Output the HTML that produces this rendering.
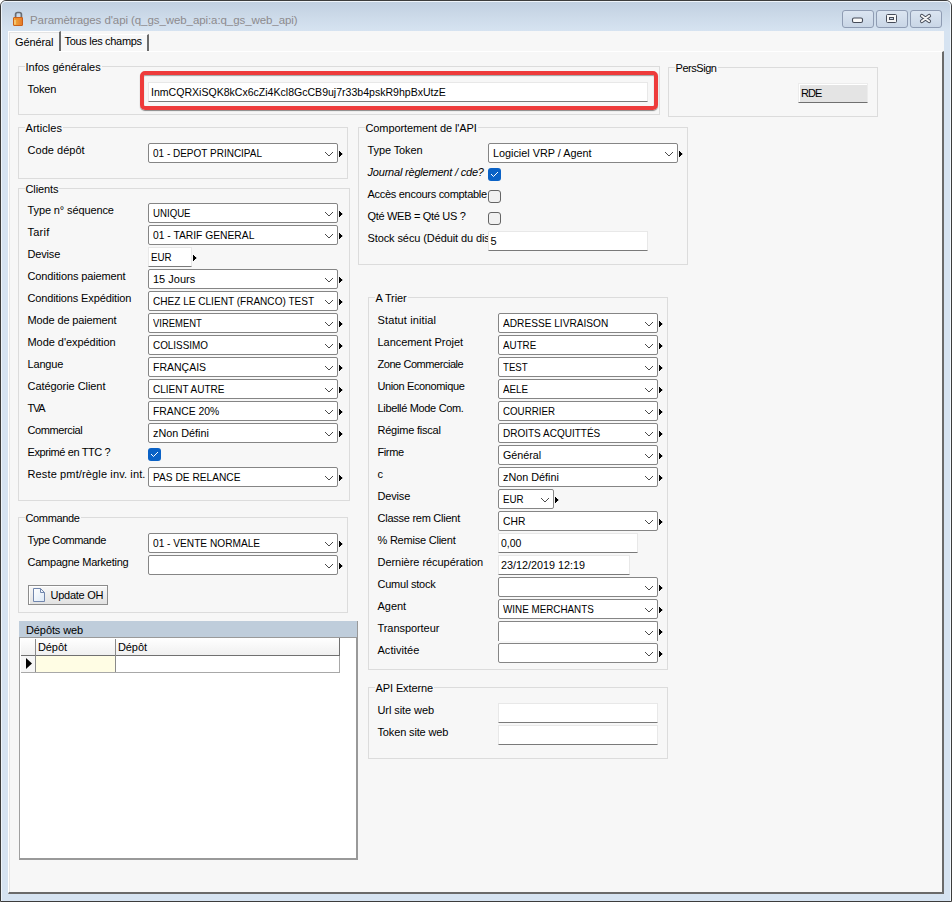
<!DOCTYPE html><html><head><meta charset="utf-8"><style>
*{margin:0;padding:0;box-sizing:border-box}
html,body{width:952px;height:902px;overflow:hidden;background:#fff}
body{position:relative;font-family:"Liberation Sans",sans-serif;font-size:11px;color:#000}
div,span,svg{position:absolute}
.frame{left:0;top:0;width:952px;height:902px;border:1px solid #3c3c3c;border-radius:6px 6px 0 0;
 background:linear-gradient(#c0cfe0 0px,#cbd9e8 14px,#d6e3f1 30px,#d6e3f1 100%);}
.frame2{left:1px;top:1px;width:950px;height:900px;border:1px solid #eef4fa;border-radius:5px 5px 0 0;border-bottom:none}
.title{left:30px;top:12px;font-size:11.5px;line-height:16px;color:#8d8b8e;white-space:nowrap;letter-spacing:-0.08px}
.wbtn{top:10px;width:32px;height:18px;border:1px solid #8f9cb3;border-radius:3px;
 background:linear-gradient(#dbe5f1,#c9d6e6)}
.client{left:8px;top:31px;width:936px;height:863px;background:#f7f7f7}
.lbl,.gt{white-space:nowrap;line-height:13px;letter-spacing:-0.1px}
.gt{background:#f7f7f7;padding:0 1px}
.grp{border:1px solid #dcdcdc}
.cb{border:1px solid #858585;border-radius:2px;background:#fff}
.clip{left:0;top:0;height:18px;overflow:hidden}
.ct{left:4px;top:3px;line-height:13px;white-space:nowrap}
.ed{border-top:1px solid #e8e8e8;border-left:1px solid #e8e8e8;border-right:1px solid #e8e8e8;border-bottom:1px solid #7a7a7a}
.et{left:1.5px;top:3px;line-height:13px;white-space:nowrap}
.chk{width:13px;height:13px;border:1px solid #656565;border-radius:3px;background:#f1f1f1}
.chk.on{border:none;background:#0a62c6}
.chk svg{left:0;top:0}
</style></head><body>
<div class="frame"></div><div class="frame2"></div>
<svg style="left:12px;top:11px" width="13" height="16">
<defs><linearGradient id="lg" x1="0" x2="1"><stop offset="0" stop-color="#f3b13a"/><stop offset="1" stop-color="#e4762a"/></linearGradient></defs>
<path d="M3.6 7 V3.5 Q3.6 1.5 5.6 1.5 H7.4 Q9.4 1.5 9.4 3.5 V7" fill="none" stroke="#6a6d73" stroke-width="1.7"/>
<rect x="1.5" y="6.5" width="9" height="8" rx="0.5" fill="url(#lg)" stroke="#c9601a" stroke-width="1"/><rect x="3" y="7" width="6" height="1.5" fill="#f08a2a"/>
<rect x="2.5" y="9" width="1" height="4.5" fill="#f8e0a8"/>
</svg>
<div class="title">Paramètrages d'api (q_gs_web_api:a:q_gs_web_api)</div>
<div class="wbtn" style="left:842px"></div>
<div class="wbtn" style="left:876px"></div>
<div class="wbtn" style="left:910px"></div>
<svg style="left:851px;top:16px" width="13" height="8"><rect x="1.5" y="2" width="10" height="4.5" rx="1.5" fill="#fafafa" stroke="#454b58" stroke-width="1.1"/></svg>
<svg style="left:885px;top:13px" width="13" height="11"><rect x="1.5" y="1.5" width="10" height="8" rx="1" fill="#f6f6f6" stroke="#454b58" stroke-width="1"/><rect x="4.5" y="4.5" width="4" height="2" fill="#c9d6e6" stroke="#454b58" stroke-width="1"/></svg>
<svg style="left:919px;top:13px" width="14" height="11"><path d="M2.8 2.8 L10.2 8.2 M10.2 2.8 L2.8 8.2" stroke="#454b58" stroke-width="3.8" stroke-linecap="round"/><path d="M2.8 2.8 L10.2 8.2 M10.2 2.8 L2.8 8.2" stroke="#f4f4f4" stroke-width="2" stroke-linecap="round"/></svg>
<div class="client"></div>
<div style="left:60px;top:34px;width:89px;height:18px;background:#f7f7f7;border-top:1px solid #fff;border-left:1px solid #fff;border-right:2px solid #6a6a6a"></div>
<div style="left:8px;top:31px;width:53px;height:21px;background:#f7f7f7;border-top:1px solid #fff;border-left:1px solid #fff;border-right:2px solid #6a6a6a"></div>
<div style="left:8px;top:51px;width:936px;height:843px;border-top:1px solid #fff;border-left:1px solid #fff;border-right:2px solid #6a6a6a;border-bottom:2px solid #6a6a6a"></div>
<div style="left:9px;top:51px;width:50px;height:2px;background:#f7f7f7"></div>
<div style="left:9px;top:32px;width:1px;height:860px;background:#e4e4e4"></div>
<div style="left:9px;top:32px;width:50px;height:1px;background:#e4e4e4"></div>
<div class="lbl" style="left:15px;top:36px">Général</div>
<div class="lbl" style="left:64.5px;top:35px;letter-spacing:-0.31px">Tous les champs</div>
<div class="grp" style="left:18px;top:66px;width:642px;height:49px"></div>
<div class="gt" style="left:24.5px;top:61px;letter-spacing:0.0px">Infos générales</div>
<div class="lbl" style="left:27.5px;top:83px;">Token</div>
<div style="left:140px;top:71px;width:518px;height:39px;border:4px solid #ee3b3b;border-radius:5px;box-shadow:0 1px 1px rgba(0,0,0,0.45), inset 0 1px 1px rgba(0,0,0,0.35)"></div>
<div class="ed" style="left:148px;top:82px;width:500px;height:20px;background:#fff"><span class="et" style="transform:scaleX(0.9588);transform-origin:0 0">InmCQRXiSQK8kCx6cZi4Kcl8GcCB9uj7r33b4pskR9hpBxUtzE</span></div>
<div class="grp" style="left:668px;top:67px;width:210px;height:50px"></div>
<div class="gt" style="left:674.5px;top:62px;letter-spacing:-0.45px">PersSign</div>
<div class="ed" style="left:798px;top:83px;width:70px;height:20px;background:#e4e4e4;border-color:#ececec #ececec #707070 #ececec;box-shadow:inset 1px 1px 0 #fff"><span class="lbl" style="left:2px;top:3px;letter-spacing:-0.9px">RDE</span></div>
<div class="grp" style="left:18px;top:127px;width:330px;height:52px"></div>
<div class="gt" style="left:24.5px;top:122px;letter-spacing:0.05px">Articles</div>
<div class="lbl" style="left:27.5px;top:144px;letter-spacing:0.033px;">Code dépôt</div>
<div class="cb" style="left:148px;top:143px;width:190px;height:20px;"><div class="clip" style="width:166px"><span class="ct" style="transform:scaleX(0.9083);transform-origin:0 0">01 - DEPOT PRINCIPAL</span></div><svg class="chev" width="8" height="4" style="left:176px;top:8px"><path d="M0 0h1v1h-1zM1 1h1v1h-1zM2 2h1v1h-1zM3 3h2v1h-2zM5 2h1v1h-1zM6 1h1v1h-1zM7 0h1v1h-1z" fill="#4a4a4a"/></svg></div>
<svg class="tri" width="4" height="6" style="left:339px;top:151px"><rect x="0" y="0" width="1" height="6"/><rect x="1" y="1" width="1" height="4"/><rect x="2" y="2" width="1" height="2"/><rect x="3" y="2" width="1" height="2" fill="#c8c8c8"/></svg>
<div class="grp" style="left:18px;top:188px;width:332px;height:313px"></div>
<div class="gt" style="left:24.5px;top:183px;letter-spacing:-0.1px">Clients</div>
<div class="lbl" style="left:27.5px;top:204px;letter-spacing:-0.113px;">Type n° séquence</div>
<div class="cb" style="left:148px;top:203px;width:190px;height:20px;"><div class="clip" style="width:166px"><span class="ct" style="transform:scaleX(0.8780);transform-origin:0 0">UNIQUE</span></div><svg class="chev" width="8" height="4" style="left:176px;top:8px"><path d="M0 0h1v1h-1zM1 1h1v1h-1zM2 2h1v1h-1zM3 3h2v1h-2zM5 2h1v1h-1zM6 1h1v1h-1zM7 0h1v1h-1z" fill="#4a4a4a"/></svg></div>
<svg class="tri" width="4" height="6" style="left:339px;top:211px"><rect x="0" y="0" width="1" height="6"/><rect x="1" y="1" width="1" height="4"/><rect x="2" y="2" width="1" height="2"/><rect x="3" y="2" width="1" height="2" fill="#c8c8c8"/></svg>
<div class="lbl" style="left:27.5px;top:226px;letter-spacing:0.25px;">Tarif</div>
<div class="cb" style="left:148px;top:225px;width:190px;height:20px;"><div class="clip" style="width:166px"><span class="ct" style="transform:scaleX(0.9352);transform-origin:0 0">01 - TARIF GENERAL</span></div><svg class="chev" width="8" height="4" style="left:176px;top:8px"><path d="M0 0h1v1h-1zM1 1h1v1h-1zM2 2h1v1h-1zM3 3h2v1h-2zM5 2h1v1h-1zM6 1h1v1h-1zM7 0h1v1h-1z" fill="#4a4a4a"/></svg></div>
<svg class="tri" width="4" height="6" style="left:339px;top:233px"><rect x="0" y="0" width="1" height="6"/><rect x="1" y="1" width="1" height="4"/><rect x="2" y="2" width="1" height="2"/><rect x="3" y="2" width="1" height="2" fill="#c8c8c8"/></svg>
<div class="lbl" style="left:27.5px;top:248px;letter-spacing:-0.16px;">Devise</div>
<div class="ed" style="left:148px;top:247px;width:44px;height:20px;background:#fff"><span class="et" style="transform:scaleX(0.8864);transform-origin:0 0">EUR</span></div>
<svg class="tri" width="4" height="6" style="left:193px;top:255px"><rect x="0" y="0" width="1" height="6"/><rect x="1" y="1" width="1" height="4"/><rect x="2" y="2" width="1" height="2"/><rect x="3" y="2" width="1" height="2" fill="#c8c8c8"/></svg>
<div class="lbl" style="left:27.5px;top:270px;letter-spacing:-0.122px;">Conditions paiement</div>
<div class="cb" style="left:148px;top:269px;width:190px;height:20px;"><div class="clip" style="width:166px"><span class="ct" style="transform:scaleX(1.0000);transform-origin:0 0">15 Jours</span></div><svg class="chev" width="8" height="4" style="left:176px;top:8px"><path d="M0 0h1v1h-1zM1 1h1v1h-1zM2 2h1v1h-1zM3 3h2v1h-2zM5 2h1v1h-1zM6 1h1v1h-1zM7 0h1v1h-1z" fill="#4a4a4a"/></svg></div>
<svg class="tri" width="4" height="6" style="left:339px;top:277px"><rect x="0" y="0" width="1" height="6"/><rect x="1" y="1" width="1" height="4"/><rect x="2" y="2" width="1" height="2"/><rect x="3" y="2" width="1" height="2" fill="#c8c8c8"/></svg>
<div class="lbl" style="left:27.5px;top:292px;letter-spacing:-0.13px;">Conditions Expédition</div>
<div class="cb" style="left:148px;top:291px;width:190px;height:20px;"><div class="clip" style="width:171px"><span class="ct" style="transform:scaleX(0.9143);transform-origin:0 0">CHEZ LE CLIENT (FRANCO) TEST</span></div><svg class="chev" width="8" height="4" style="left:176px;top:8px"><path d="M0 0h1v1h-1zM1 1h1v1h-1zM2 2h1v1h-1zM3 3h2v1h-2zM5 2h1v1h-1zM6 1h1v1h-1zM7 0h1v1h-1z" fill="#4a4a4a"/></svg></div>
<svg class="tri" width="4" height="6" style="left:339px;top:299px"><rect x="0" y="0" width="1" height="6"/><rect x="1" y="1" width="1" height="4"/><rect x="2" y="2" width="1" height="2"/><rect x="3" y="2" width="1" height="2" fill="#c8c8c8"/></svg>
<div class="lbl" style="left:27.5px;top:314px;letter-spacing:-0.133px;">Mode de paiement</div>
<div class="cb" style="left:148px;top:313px;width:190px;height:20px;"><div class="clip" style="width:166px"><span class="ct" style="transform:scaleX(0.8596);transform-origin:0 0">VIREMENT</span></div><svg class="chev" width="8" height="4" style="left:176px;top:8px"><path d="M0 0h1v1h-1zM1 1h1v1h-1zM2 2h1v1h-1zM3 3h2v1h-2zM5 2h1v1h-1zM6 1h1v1h-1zM7 0h1v1h-1z" fill="#4a4a4a"/></svg></div>
<svg class="tri" width="4" height="6" style="left:339px;top:321px"><rect x="0" y="0" width="1" height="6"/><rect x="1" y="1" width="1" height="4"/><rect x="2" y="2" width="1" height="2"/><rect x="3" y="2" width="1" height="2" fill="#c8c8c8"/></svg>
<div class="lbl" style="left:27.5px;top:336px;letter-spacing:-0.05px;">Mode d'expédition</div>
<div class="cb" style="left:148px;top:335px;width:190px;height:20px;"><div class="clip" style="width:166px"><span class="ct" style="transform:scaleX(0.9000);transform-origin:0 0">COLISSIMO</span></div><svg class="chev" width="8" height="4" style="left:176px;top:8px"><path d="M0 0h1v1h-1zM1 1h1v1h-1zM2 2h1v1h-1zM3 3h2v1h-2zM5 2h1v1h-1zM6 1h1v1h-1zM7 0h1v1h-1z" fill="#4a4a4a"/></svg></div>
<svg class="tri" width="4" height="6" style="left:339px;top:343px"><rect x="0" y="0" width="1" height="6"/><rect x="1" y="1" width="1" height="4"/><rect x="2" y="2" width="1" height="2"/><rect x="3" y="2" width="1" height="2" fill="#c8c8c8"/></svg>
<div class="lbl" style="left:27.5px;top:358px;letter-spacing:-0.16px;">Langue</div>
<div class="cb" style="left:148px;top:357px;width:190px;height:20px;"><div class="clip" style="width:166px"><span class="ct" style="transform:scaleX(0.9537);transform-origin:0 0">FRANÇAIS</span></div><svg class="chev" width="8" height="4" style="left:176px;top:8px"><path d="M0 0h1v1h-1zM1 1h1v1h-1zM2 2h1v1h-1zM3 3h2v1h-2zM5 2h1v1h-1zM6 1h1v1h-1zM7 0h1v1h-1z" fill="#4a4a4a"/></svg></div>
<svg class="tri" width="4" height="6" style="left:339px;top:365px"><rect x="0" y="0" width="1" height="6"/><rect x="1" y="1" width="1" height="4"/><rect x="2" y="2" width="1" height="2"/><rect x="3" y="2" width="1" height="2" fill="#c8c8c8"/></svg>
<div class="lbl" style="left:27.5px;top:380px;letter-spacing:-0.06px;">Catégorie Client</div>
<div class="cb" style="left:148px;top:379px;width:190px;height:20px;"><div class="clip" style="width:166px"><span class="ct" style="transform:scaleX(0.9091);transform-origin:0 0">CLIENT AUTRE</span></div><svg class="chev" width="8" height="4" style="left:176px;top:8px"><path d="M0 0h1v1h-1zM1 1h1v1h-1zM2 2h1v1h-1zM3 3h2v1h-2zM5 2h1v1h-1zM6 1h1v1h-1zM7 0h1v1h-1z" fill="#4a4a4a"/></svg></div>
<svg class="tri" width="4" height="6" style="left:339px;top:387px"><rect x="0" y="0" width="1" height="6"/><rect x="1" y="1" width="1" height="4"/><rect x="2" y="2" width="1" height="2"/><rect x="3" y="2" width="1" height="2" fill="#c8c8c8"/></svg>
<div class="lbl" style="left:27.5px;top:402px;letter-spacing:-1.3px;">TVA</div>
<div class="cb" style="left:148px;top:401px;width:190px;height:20px;"><div class="clip" style="width:166px"><span class="ct" style="transform:scaleX(0.9420);transform-origin:0 0">FRANCE 20%</span></div><svg class="chev" width="8" height="4" style="left:176px;top:8px"><path d="M0 0h1v1h-1zM1 1h1v1h-1zM2 2h1v1h-1zM3 3h2v1h-2zM5 2h1v1h-1zM6 1h1v1h-1zM7 0h1v1h-1z" fill="#4a4a4a"/></svg></div>
<svg class="tri" width="4" height="6" style="left:339px;top:409px"><rect x="0" y="0" width="1" height="6"/><rect x="1" y="1" width="1" height="4"/><rect x="2" y="2" width="1" height="2"/><rect x="3" y="2" width="1" height="2" fill="#c8c8c8"/></svg>
<div class="lbl" style="left:27.5px;top:424px;letter-spacing:-0.389px;">Commercial</div>
<div class="cb" style="left:148px;top:423px;width:190px;height:20px;"><div class="clip" style="width:166px"><span class="ct" style="transform:scaleX(0.9821);transform-origin:0 0">zNon Défini</span></div><svg class="chev" width="8" height="4" style="left:176px;top:8px"><path d="M0 0h1v1h-1zM1 1h1v1h-1zM2 2h1v1h-1zM3 3h2v1h-2zM5 2h1v1h-1zM6 1h1v1h-1zM7 0h1v1h-1z" fill="#4a4a4a"/></svg></div>
<svg class="tri" width="4" height="6" style="left:339px;top:431px"><rect x="0" y="0" width="1" height="6"/><rect x="1" y="1" width="1" height="4"/><rect x="2" y="2" width="1" height="2"/><rect x="3" y="2" width="1" height="2" fill="#c8c8c8"/></svg>
<div class="lbl" style="left:27.5px;top:446px;letter-spacing:-0.393px;">Exprimé en TTC ?</div>
<div class="chk on" style="left:148px;top:448px"><svg width="13" height="13"><path d="M3 6 L5.5 8.5 L10 4" fill="none" stroke="#fff" stroke-width="1"/></svg></div>
<div class="lbl" style="left:27.5px;top:468px;letter-spacing:0.133px;">Reste pmt/règle inv. int.</div>
<div class="cb" style="left:148px;top:467px;width:190px;height:20px;"><div class="clip" style="width:166px"><span class="ct" style="transform:scaleX(0.9247);transform-origin:0 0">PAS DE RELANCE</span></div><svg class="chev" width="8" height="4" style="left:176px;top:8px"><path d="M0 0h1v1h-1zM1 1h1v1h-1zM2 2h1v1h-1zM3 3h2v1h-2zM5 2h1v1h-1zM6 1h1v1h-1zM7 0h1v1h-1z" fill="#4a4a4a"/></svg></div>
<svg class="tri" width="4" height="6" style="left:339px;top:475px"><rect x="0" y="0" width="1" height="6"/><rect x="1" y="1" width="1" height="4"/><rect x="2" y="2" width="1" height="2"/><rect x="3" y="2" width="1" height="2" fill="#c8c8c8"/></svg>
<div class="grp" style="left:18px;top:517px;width:330px;height:96px"></div>
<div class="gt" style="left:24.5px;top:512px;letter-spacing:-0.35px">Commande</div>
<div class="lbl" style="left:27.5px;top:534px;letter-spacing:-0.408px;">Type Commande</div>
<div class="cb" style="left:148px;top:533px;width:190px;height:20px;"><div class="clip" style="width:166px"><span class="ct" style="transform:scaleX(0.9224);transform-origin:0 0">01 - VENTE NORMALE</span></div><svg class="chev" width="8" height="4" style="left:176px;top:8px"><path d="M0 0h1v1h-1zM1 1h1v1h-1zM2 2h1v1h-1zM3 3h2v1h-2zM5 2h1v1h-1zM6 1h1v1h-1zM7 0h1v1h-1z" fill="#4a4a4a"/></svg></div>
<svg class="tri" width="4" height="6" style="left:339px;top:541px"><rect x="0" y="0" width="1" height="6"/><rect x="1" y="1" width="1" height="4"/><rect x="2" y="2" width="1" height="2"/><rect x="3" y="2" width="1" height="2" fill="#c8c8c8"/></svg>
<div class="lbl" style="left:27.5px;top:556px;letter-spacing:-0.235px;">Campagne Marketing</div>
<div class="cb" style="left:148px;top:555px;width:190px;height:20px;"><div class="clip" style="width:166px"><span class="ct" style=""></span></div><svg class="chev" width="8" height="4" style="left:176px;top:8px"><path d="M0 0h1v1h-1zM1 1h1v1h-1zM2 2h1v1h-1zM3 3h2v1h-2zM5 2h1v1h-1zM6 1h1v1h-1zM7 0h1v1h-1z" fill="#4a4a4a"/></svg></div>
<svg class="tri" width="4" height="6" style="left:339px;top:563px"><rect x="0" y="0" width="1" height="6"/><rect x="1" y="1" width="1" height="4"/><rect x="2" y="2" width="1" height="2"/><rect x="3" y="2" width="1" height="2" fill="#c8c8c8"/></svg>
<div style="left:28px;top:585px;width:80px;height:20px;border:1px solid #8c8c8c;background:linear-gradient(#f8f8f8,#e2e2e2);box-shadow:inset 1px 1px 0 #fff"></div>
<svg style="left:32px;top:587px" width="14" height="16"><defs><linearGradient id="dg" x1="0" y1="0" x2="1" y2="1"><stop offset="0" stop-color="#fff"/><stop offset="1" stop-color="#dce8f6"/></linearGradient></defs><path d="M1.5 1.5 H8.5 L12.5 5.5 V14.5 H1.5 Z" fill="url(#dg)" stroke="#7186ad"/><path d="M8.5 1.5 V5.5 H12.5" fill="none" stroke="#7186ad"/></svg>
<div class="lbl" style="left:50.5px;top:589px;letter-spacing:-0.25px">Update OH</div>
<div style="left:19px;top:621px;width:339px;height:239px;background:#fff;border-left:1px solid #a0a0a0;border-right:2px solid #999;border-bottom:2px solid #999"></div>
<div style="left:19px;top:621px;width:338px;height:17px;background:#bfcddb;border-bottom:1px solid #9a9a9a"></div>
<div class="lbl" style="left:26px;top:624px;">Dépôts web</div>
<div style="left:21px;top:638px;width:319px;height:18px;background:linear-gradient(#fff,#f0f0f0);border-bottom:1px solid #707070;border-right:1px solid #707070"></div>
<div style="left:35px;top:639px;width:1px;height:34px;background:#8a8a8a"></div>
<div style="left:115px;top:639px;width:1px;height:34px;background:#8a8a8a"></div>
<div class="lbl" style="left:38px;top:641px;">Dépôt</div>
<div class="lbl" style="left:118px;top:641px;">Dépôt</div>
<div style="left:21px;top:656px;width:14px;height:17px;background:#f6f6f6;border-bottom:1px solid #8a8a8a"></div>
<div style="left:36px;top:656px;width:79px;height:16px;background:#fffde4"></div>
<div style="left:21px;top:672px;width:319px;height:1px;background:#a8a8a8"></div>
<div style="left:339px;top:656px;width:1px;height:17px;background:#a8a8a8"></div>
<svg style="left:26px;top:658px" width="7" height="12"><path d="M0 0 L6 5.5 L0 11 Z" fill="#000"/></svg>
<div class="grp" style="left:358px;top:127px;width:330px;height:138px"></div>
<div class="gt" style="left:364.5px;top:122px;letter-spacing:-0.1px">Comportement de l'API</div>
<div class="lbl" style="left:367.5px;top:144px;letter-spacing:-0.111px;">Type Token</div>
<div class="cb" style="left:488px;top:143px;width:190px;height:20px;"><div class="clip" style="width:166px"><span class="ct" style="transform:scaleX(0.9838);transform-origin:0 0">Logiciel VRP / Agent</span></div><svg class="chev" width="8" height="4" style="left:176px;top:8px"><path d="M0 0h1v1h-1zM1 1h1v1h-1zM2 2h1v1h-1zM3 3h2v1h-2zM5 2h1v1h-1zM6 1h1v1h-1zM7 0h1v1h-1z" fill="#4a4a4a"/></svg></div>
<svg class="tri" width="4" height="6" style="left:679px;top:151px"><rect x="0" y="0" width="1" height="6"/><rect x="1" y="1" width="1" height="4"/><rect x="2" y="2" width="1" height="2"/><rect x="3" y="2" width="1" height="2" fill="#c8c8c8"/></svg>
<div class="lbl" style="left:367.5px;top:166px;font-style:italic;letter-spacing:-0.2px">Journal règlement / cde?</div>
<div class="chk on" style="left:488px;top:168px"><svg width="13" height="13"><path d="M3 6 L5.5 8.5 L10 4" fill="none" stroke="#fff" stroke-width="1"/></svg></div>
<div class="lbl" style="left:367.5px;top:188px;letter-spacing:-0.291px;">Accès encours comptable</div>
<div class="chk" style="left:488px;top:190px"></div>
<div class="lbl" style="left:367.5px;top:210px;letter-spacing:-0.312px;">Qté WEB = Qté US ?</div>
<div class="chk" style="left:488px;top:212px"></div>
<div style="left:360px;top:225px;width:128px;height:20px;overflow:hidden"><div class="lbl" style="left:7.5px;top:7px">Stock sécu (Déduit du disponible)</div></div>
<div class="ed" style="left:488px;top:231px;width:160px;height:20px;background:#fff"><span class="et" style="">5</span></div>
<div class="grp" style="left:368px;top:297px;width:300px;height:373px"></div>
<div class="gt" style="left:374.5px;top:292px;letter-spacing:-0.1px">A Trier</div>
<div class="lbl" style="left:377.5px;top:314px;letter-spacing:0.131px;">Statut initial</div>
<div class="cb" style="left:498px;top:313px;width:160px;height:20px;"><div class="clip" style="width:136px"><span class="ct" style="transform:scaleX(0.9211);transform-origin:0 0">ADRESSE LIVRAISON</span></div><svg class="chev" width="8" height="4" style="left:146px;top:8px"><path d="M0 0h1v1h-1zM1 1h1v1h-1zM2 2h1v1h-1zM3 3h2v1h-2zM5 2h1v1h-1zM6 1h1v1h-1zM7 0h1v1h-1z" fill="#4a4a4a"/></svg></div>
<svg class="tri" width="4" height="6" style="left:659px;top:321px"><rect x="0" y="0" width="1" height="6"/><rect x="1" y="1" width="1" height="4"/><rect x="2" y="2" width="1" height="2"/><rect x="3" y="2" width="1" height="2" fill="#c8c8c8"/></svg>
<div class="lbl" style="left:377.5px;top:336px;letter-spacing:-0.047px;">Lancement Projet</div>
<div class="cb" style="left:498px;top:335px;width:160px;height:20px;"><div class="clip" style="width:136px"><span class="ct" style="transform:scaleX(0.8919);transform-origin:0 0">AUTRE</span></div><svg class="chev" width="8" height="4" style="left:146px;top:8px"><path d="M0 0h1v1h-1zM1 1h1v1h-1zM2 2h1v1h-1zM3 3h2v1h-2zM5 2h1v1h-1zM6 1h1v1h-1zM7 0h1v1h-1z" fill="#4a4a4a"/></svg></div>
<svg class="tri" width="4" height="6" style="left:659px;top:343px"><rect x="0" y="0" width="1" height="6"/><rect x="1" y="1" width="1" height="4"/><rect x="2" y="2" width="1" height="2"/><rect x="3" y="2" width="1" height="2" fill="#c8c8c8"/></svg>
<div class="lbl" style="left:377.5px;top:358px;letter-spacing:-0.447px;">Zone Commerciale</div>
<div class="cb" style="left:498px;top:357px;width:160px;height:20px;"><div class="clip" style="width:136px"><span class="ct" style="transform:scaleX(0.8786);transform-origin:0 0">TEST</span></div><svg class="chev" width="8" height="4" style="left:146px;top:8px"><path d="M0 0h1v1h-1zM1 1h1v1h-1zM2 2h1v1h-1zM3 3h2v1h-2zM5 2h1v1h-1zM6 1h1v1h-1zM7 0h1v1h-1z" fill="#4a4a4a"/></svg></div>
<svg class="tri" width="4" height="6" style="left:659px;top:365px"><rect x="0" y="0" width="1" height="6"/><rect x="1" y="1" width="1" height="4"/><rect x="2" y="2" width="1" height="2"/><rect x="3" y="2" width="1" height="2" fill="#c8c8c8"/></svg>
<div class="lbl" style="left:377.5px;top:380px;letter-spacing:-0.38px;">Union Economique</div>
<div class="cb" style="left:498px;top:379px;width:160px;height:20px;"><div class="clip" style="width:136px"><span class="ct" style="transform:scaleX(0.8929);transform-origin:0 0">AELE</span></div><svg class="chev" width="8" height="4" style="left:146px;top:8px"><path d="M0 0h1v1h-1zM1 1h1v1h-1zM2 2h1v1h-1zM3 3h2v1h-2zM5 2h1v1h-1zM6 1h1v1h-1zM7 0h1v1h-1z" fill="#4a4a4a"/></svg></div>
<svg class="tri" width="4" height="6" style="left:659px;top:387px"><rect x="0" y="0" width="1" height="6"/><rect x="1" y="1" width="1" height="4"/><rect x="2" y="2" width="1" height="2"/><rect x="3" y="2" width="1" height="2" fill="#c8c8c8"/></svg>
<div class="lbl" style="left:377.5px;top:402px;letter-spacing:-0.331px;">Libellé Mode Com.</div>
<div class="cb" style="left:498px;top:401px;width:160px;height:20px;"><div class="clip" style="width:136px"><span class="ct" style="transform:scaleX(0.8860);transform-origin:0 0">COURRIER</span></div><svg class="chev" width="8" height="4" style="left:146px;top:8px"><path d="M0 0h1v1h-1zM1 1h1v1h-1zM2 2h1v1h-1zM3 3h2v1h-2zM5 2h1v1h-1zM6 1h1v1h-1zM7 0h1v1h-1z" fill="#4a4a4a"/></svg></div>
<svg class="tri" width="4" height="6" style="left:659px;top:409px"><rect x="0" y="0" width="1" height="6"/><rect x="1" y="1" width="1" height="4"/><rect x="2" y="2" width="1" height="2"/><rect x="3" y="2" width="1" height="2" fill="#c8c8c8"/></svg>
<div class="lbl" style="left:377.5px;top:424px;letter-spacing:-0.225px;">Régime fiscal</div>
<div class="cb" style="left:498px;top:423px;width:160px;height:20px;"><div class="clip" style="width:136px"><span class="ct" style="transform:scaleX(0.9094);transform-origin:0 0">DROITS ACQUITTÉS</span></div><svg class="chev" width="8" height="4" style="left:146px;top:8px"><path d="M0 0h1v1h-1zM1 1h1v1h-1zM2 2h1v1h-1zM3 3h2v1h-2zM5 2h1v1h-1zM6 1h1v1h-1zM7 0h1v1h-1z" fill="#4a4a4a"/></svg></div>
<svg class="tri" width="4" height="6" style="left:659px;top:431px"><rect x="0" y="0" width="1" height="6"/><rect x="1" y="1" width="1" height="4"/><rect x="2" y="2" width="1" height="2"/><rect x="3" y="2" width="1" height="2" fill="#c8c8c8"/></svg>
<div class="lbl" style="left:377.5px;top:446px;letter-spacing:-0.4px;">Firme</div>
<div class="cb" style="left:498px;top:445px;width:160px;height:20px;"><div class="clip" style="width:136px"><span class="ct" style="transform:scaleX(0.9744);transform-origin:0 0">Général</span></div><svg class="chev" width="8" height="4" style="left:146px;top:8px"><path d="M0 0h1v1h-1zM1 1h1v1h-1zM2 2h1v1h-1zM3 3h2v1h-2zM5 2h1v1h-1zM6 1h1v1h-1zM7 0h1v1h-1z" fill="#4a4a4a"/></svg></div>
<svg class="tri" width="4" height="6" style="left:659px;top:453px"><rect x="0" y="0" width="1" height="6"/><rect x="1" y="1" width="1" height="4"/><rect x="2" y="2" width="1" height="2"/><rect x="3" y="2" width="1" height="2" fill="#c8c8c8"/></svg>
<div class="lbl" style="left:377.5px;top:468px;">c</div>
<div class="cb" style="left:498px;top:467px;width:160px;height:20px;"><div class="clip" style="width:136px"><span class="ct" style="transform:scaleX(0.9821);transform-origin:0 0">zNon Défini</span></div><svg class="chev" width="8" height="4" style="left:146px;top:8px"><path d="M0 0h1v1h-1zM1 1h1v1h-1zM2 2h1v1h-1zM3 3h2v1h-2zM5 2h1v1h-1zM6 1h1v1h-1zM7 0h1v1h-1z" fill="#4a4a4a"/></svg></div>
<svg class="tri" width="4" height="6" style="left:659px;top:475px"><rect x="0" y="0" width="1" height="6"/><rect x="1" y="1" width="1" height="4"/><rect x="2" y="2" width="1" height="2"/><rect x="3" y="2" width="1" height="2" fill="#c8c8c8"/></svg>
<div class="lbl" style="left:377.5px;top:490px;letter-spacing:-0.16px;">Devise</div>
<div class="cb" style="left:498px;top:489px;width:56px;height:20px;"><div class="clip" style="width:30px"><span class="ct" style="transform:scaleX(0.8864);transform-origin:0 0">EUR</span></div><svg class="chev" width="8" height="4" style="left:42px;top:8px"><path d="M0 0h1v1h-1zM1 1h1v1h-1zM2 2h1v1h-1zM3 3h2v1h-2zM5 2h1v1h-1zM6 1h1v1h-1zM7 0h1v1h-1z" fill="#4a4a4a"/></svg></div>
<svg class="tri" width="4" height="6" style="left:555px;top:497px"><rect x="0" y="0" width="1" height="6"/><rect x="1" y="1" width="1" height="4"/><rect x="2" y="2" width="1" height="2"/><rect x="3" y="2" width="1" height="2" fill="#c8c8c8"/></svg>
<div class="lbl" style="left:377.5px;top:512px;letter-spacing:-0.256px;">Classe rem Client</div>
<div class="cb" style="left:498px;top:511px;width:160px;height:20px;"><div class="clip" style="width:136px"><span class="ct" style="transform:scaleX(0.9364);transform-origin:0 0">CHR</span></div><svg class="chev" width="8" height="4" style="left:146px;top:8px"><path d="M0 0h1v1h-1zM1 1h1v1h-1zM2 2h1v1h-1zM3 3h2v1h-2zM5 2h1v1h-1zM6 1h1v1h-1zM7 0h1v1h-1z" fill="#4a4a4a"/></svg></div>
<svg class="tri" width="4" height="6" style="left:659px;top:519px"><rect x="0" y="0" width="1" height="6"/><rect x="1" y="1" width="1" height="4"/><rect x="2" y="2" width="1" height="2"/><rect x="3" y="2" width="1" height="2" fill="#c8c8c8"/></svg>
<div class="lbl" style="left:377.5px;top:534px;letter-spacing:-0.221px;">% Remise Client</div>
<div class="ed" style="left:498px;top:533px;width:140px;height:20px;background:#fff"><span class="et" style="transform:scaleX(0.9524);transform-origin:0 0">0,00</span></div>
<div class="lbl" style="left:377.5px;top:556px;letter-spacing:-0.04px;">Dernière récupération</div>
<div class="ed" style="left:498px;top:555px;width:132px;height:20px;background:#fff"><span class="et" style="transform:scaleX(0.9812);transform-origin:0 0">23/12/2019 12:19</span></div>
<div class="lbl" style="left:377.5px;top:578px;letter-spacing:-0.23px;">Cumul stock</div>
<div class="cb" style="left:498px;top:577px;width:160px;height:20px;"><div class="clip" style="width:136px"><span class="ct" style=""></span></div><svg class="chev" width="8" height="4" style="left:146px;top:8px"><path d="M0 0h1v1h-1zM1 1h1v1h-1zM2 2h1v1h-1zM3 3h2v1h-2zM5 2h1v1h-1zM6 1h1v1h-1zM7 0h1v1h-1z" fill="#4a4a4a"/></svg></div>
<svg class="tri" width="4" height="6" style="left:659px;top:585px"><rect x="0" y="0" width="1" height="6"/><rect x="1" y="1" width="1" height="4"/><rect x="2" y="2" width="1" height="2"/><rect x="3" y="2" width="1" height="2" fill="#c8c8c8"/></svg>
<div class="lbl" style="left:377.5px;top:600px;letter-spacing:-0.025px;">Agent</div>
<div class="cb" style="left:498px;top:599px;width:160px;height:20px;"><div class="clip" style="width:136px"><span class="ct" style="transform:scaleX(0.8950);transform-origin:0 0">WINE MERCHANTS</span></div><svg class="chev" width="8" height="4" style="left:146px;top:8px"><path d="M0 0h1v1h-1zM1 1h1v1h-1zM2 2h1v1h-1zM3 3h2v1h-2zM5 2h1v1h-1zM6 1h1v1h-1zM7 0h1v1h-1z" fill="#4a4a4a"/></svg></div>
<svg class="tri" width="4" height="6" style="left:659px;top:607px"><rect x="0" y="0" width="1" height="6"/><rect x="1" y="1" width="1" height="4"/><rect x="2" y="2" width="1" height="2"/><rect x="3" y="2" width="1" height="2" fill="#c8c8c8"/></svg>
<div class="lbl" style="left:377.5px;top:622px;letter-spacing:-0.064px;">Transporteur</div>
<div class="cb" style="left:498px;top:621px;width:160px;height:20px;border-bottom:none;border-radius:2px 2px 0 0;"><div class="clip" style="width:136px"><span class="ct" style=""></span></div><svg class="chev" width="8" height="4" style="left:146px;top:9px"><path d="M0 0h1v1h-1zM1 1h1v1h-1zM2 2h1v1h-1zM3 3h2v1h-2zM5 2h1v1h-1zM6 1h1v1h-1zM7 0h1v1h-1z" fill="#4a4a4a"/></svg></div>
<svg class="tri" width="4" height="6" style="left:659px;top:629px"><rect x="0" y="0" width="1" height="6"/><rect x="1" y="1" width="1" height="4"/><rect x="2" y="2" width="1" height="2"/><rect x="3" y="2" width="1" height="2" fill="#c8c8c8"/></svg>
<div class="lbl" style="left:377.5px;top:644px;letter-spacing:0.037px;">Activitée</div>
<div class="cb" style="left:498px;top:643px;width:160px;height:20px;"><div class="clip" style="width:136px"><span class="ct" style=""></span></div><svg class="chev" width="8" height="4" style="left:146px;top:8px"><path d="M0 0h1v1h-1zM1 1h1v1h-1zM2 2h1v1h-1zM3 3h2v1h-2zM5 2h1v1h-1zM6 1h1v1h-1zM7 0h1v1h-1z" fill="#4a4a4a"/></svg></div>
<svg class="tri" width="4" height="6" style="left:659px;top:651px"><rect x="0" y="0" width="1" height="6"/><rect x="1" y="1" width="1" height="4"/><rect x="2" y="2" width="1" height="2"/><rect x="3" y="2" width="1" height="2" fill="#c8c8c8"/></svg>
<div class="grp" style="left:368px;top:687px;width:300px;height:72px"></div>
<div class="gt" style="left:374.5px;top:682px;letter-spacing:-0.1px">API Externe</div>
<div class="lbl" style="left:377.5px;top:704px;letter-spacing:-0.082px;">Url site web</div>
<div class="ed" style="left:498px;top:703px;width:160px;height:20px;background:#fff"><span class="et" style=""></span></div>
<div class="lbl" style="left:377.5px;top:726px;letter-spacing:-0.146px;">Token site web</div>
<div class="ed" style="left:498px;top:725px;width:160px;height:20px;background:#fff"><span class="et" style=""></span></div>
</body></html>
